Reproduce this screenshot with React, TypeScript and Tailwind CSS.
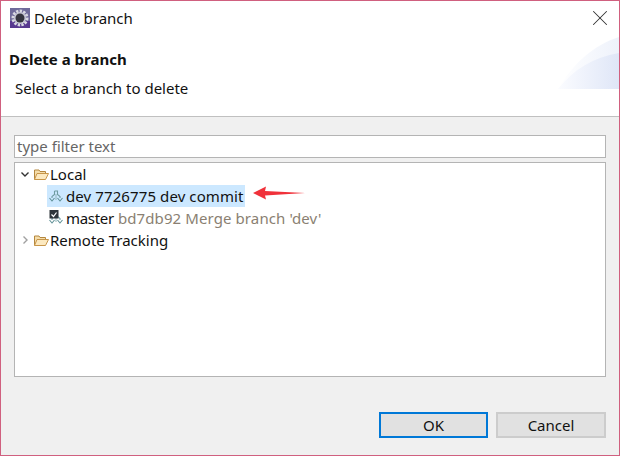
import { X } from "lucide-react";

const Folder = () => (
  <svg width="15" height="13" viewBox="0 0 15 13" fill="none" className="shrink-0">
    <path d="M0.5 11.5V2h4.5l1 1.5h5.5V6" stroke="#b4873f" strokeWidth="1" fill="#f5ddaa" />
    <path d="M0.5 11.5L3 5.5h11.5l-3 6z" stroke="#c8964a" strokeWidth="1" fill="#fce9c0" />
  </svg>
);

const BranchIcon = ({ checked }: { checked?: boolean }) => (
  <svg width="14" height="16" viewBox="0 0 14 16" fill="none" className="shrink-0">
    <path d="M5.5 3h3v3.5l2.5 2v1.5M5.5 3v3.5l-2.5 2v1.5" stroke="#6f9ca1" strokeWidth="1.1" />
    <path d="M7 6v6" stroke="#8db3b7" strokeWidth="1" />
    <path d="M0.5 10l2.5 3 2.5-3M8.5 10l2.5 3 2.5-3" stroke="#5f9096" strokeWidth="1.1" />
    {checked && (
      <>
        <rect x="0.5" y="0" width="9" height="8.5" fill="#2f353a" />
        <path d="M2.5 4.5l2 2 3-4" stroke="#ffffff" strokeWidth="1.2" />
      </>
    )}
  </svg>
);

const Chevron = ({ open }: { open?: boolean }) => (
  <svg width="10" height="10" viewBox="0 0 10 10" fill="none" className="shrink-0">
    {open ? (
      <path d="M1.5 3.5L5 7l3.5-3.5" stroke="#333333" strokeWidth="1.4" />
    ) : (
      <path d="M3.5 1.5L7 5 3.5 8.5" stroke="#a0a0a0" strokeWidth="1.4" />
    )}
  </svg>
);

const App = () => {
  return (
    <div className="w-[620px] h-[456px] flex flex-col border border-[#d0607f] bg-[#f0f0f0] text-[15px] text-[#111] overflow-hidden font-['Noto_Sans',sans-serif]">
      <section className="relative h-[116px] shrink-0 bg-white border-b border-[#c0c0c0]">
        <div className="flex items-center h-[34px] pl-[9px] pr-[6px]">
          <svg width="20" height="20" viewBox="0 0 20 20" className="shrink-0">
            <rect width="20" height="20" fill="#6f6a9a" />
            <rect y="13" width="20" height="7" fill="#57398f" />
            <circle cx="10" cy="10" r="7" fill="none" stroke="#d9d9e2" strokeWidth="3" strokeDasharray="2.4 1.2" />
            <circle cx="10" cy="10" r="6" fill="#c9c9d6" />
            <circle cx="10" cy="10" r="4.5" fill="#35353f" />
          </svg>
          <span className="ml-[4px] leading-5">Delete branch</span>
          <X size={26} strokeWidth={0.95} className="ml-auto text-[#333]" />
        </div>
        <h1 className="mt-[14px] ml-[8px] font-bold leading-5">Delete a branch</h1>
        <p className="mt-[9px] ml-[14px] leading-5">Select a branch to delete</p>
        <svg width="61" height="52" viewBox="0 0 61 52" className="absolute right-0 bottom-[27px]">
          <defs>
            <linearGradient id="waveOuter" x1="0" y1="0" x2="1" y2="0">
              <stop offset="0" stopColor="#ffffff" />
              <stop offset="1" stopColor="#eef2fb" />
            </linearGradient>
            <linearGradient id="waveInner" x1="0" y1="0" x2="1" y2="0">
              <stop offset="0" stopColor="#fbfcff" />
              <stop offset="1" stopColor="#dfe6f7" />
            </linearGradient>
          </defs>
          <path d="M0 52C14 28 35 8 61 0V52z" fill="url(#waveOuter)" />
          <path d="M0 52C15 33 35 20 61 16V52z" fill="url(#waveInner)" />
        </svg>
      </section>

      <main className="flex-1 flex flex-col px-[13px] pt-[18px]">
        <div className="h-[23px] shrink-0 bg-white border border-[#b4b4b4] flex items-center px-[2px] text-[#666]">
          type filter text
        </div>
        <div className="relative mt-[4px] h-[215px] shrink-0 bg-white border border-[#b4b4b4] leading-[22px]">
          <div className="flex items-center h-[22px] pl-[5px]">
            <Chevron open />
            <span className="ml-[4px]"><Folder /></span>
            <span className="ml-[1px]">Local</span>
          </div>
          <div className="flex items-center h-[22px] pl-[32px]">
            <div className="flex items-center h-[22px] w-[198px] bg-[#cce8ff] pl-[2px]">
              <BranchIcon />
              <span className="ml-[3px] tracking-[0.1px]">dev 7726775 dev commit</span>
            </div>
          </div>
          <div className="flex items-center h-[22px] pl-[34px]">
            <BranchIcon checked />
            <span className="ml-[3px] tracking-[-0.3px]">master</span>
            <span className="ml-[4px] tracking-[0.1px] text-[#8a7f72]">bd7db92 Merge branch 'dev'</span>
          </div>
          <div className="flex items-center h-[22px] pl-[5px]">
            <Chevron />
            <span className="ml-[4px]"><Folder /></span>
            <span className="ml-[1px]">Remote Tracking</span>
          </div>
          <svg width="52" height="14" viewBox="0 0 52 14" className="absolute left-[238px] top-[23px]">
            <path d="M0 7L13 0.5L12 5L52 7L12 9.5L13 13.5z" fill="#f0313a" />
          </svg>
        </div>
        <div className="flex justify-end gap-[8px] mt-[35px]">
          <button className="w-[109px] h-[26px] bg-[#e1e1e1] border-2 border-[#0078d7] flex items-center justify-center">OK</button>
          <button className="w-[110px] h-[26px] bg-[#e1e1e1] border-2 border-[#cccccc] flex items-center justify-center">Cancel</button>
        </div>
      </main>
    </div>
  );
};

export default App;
